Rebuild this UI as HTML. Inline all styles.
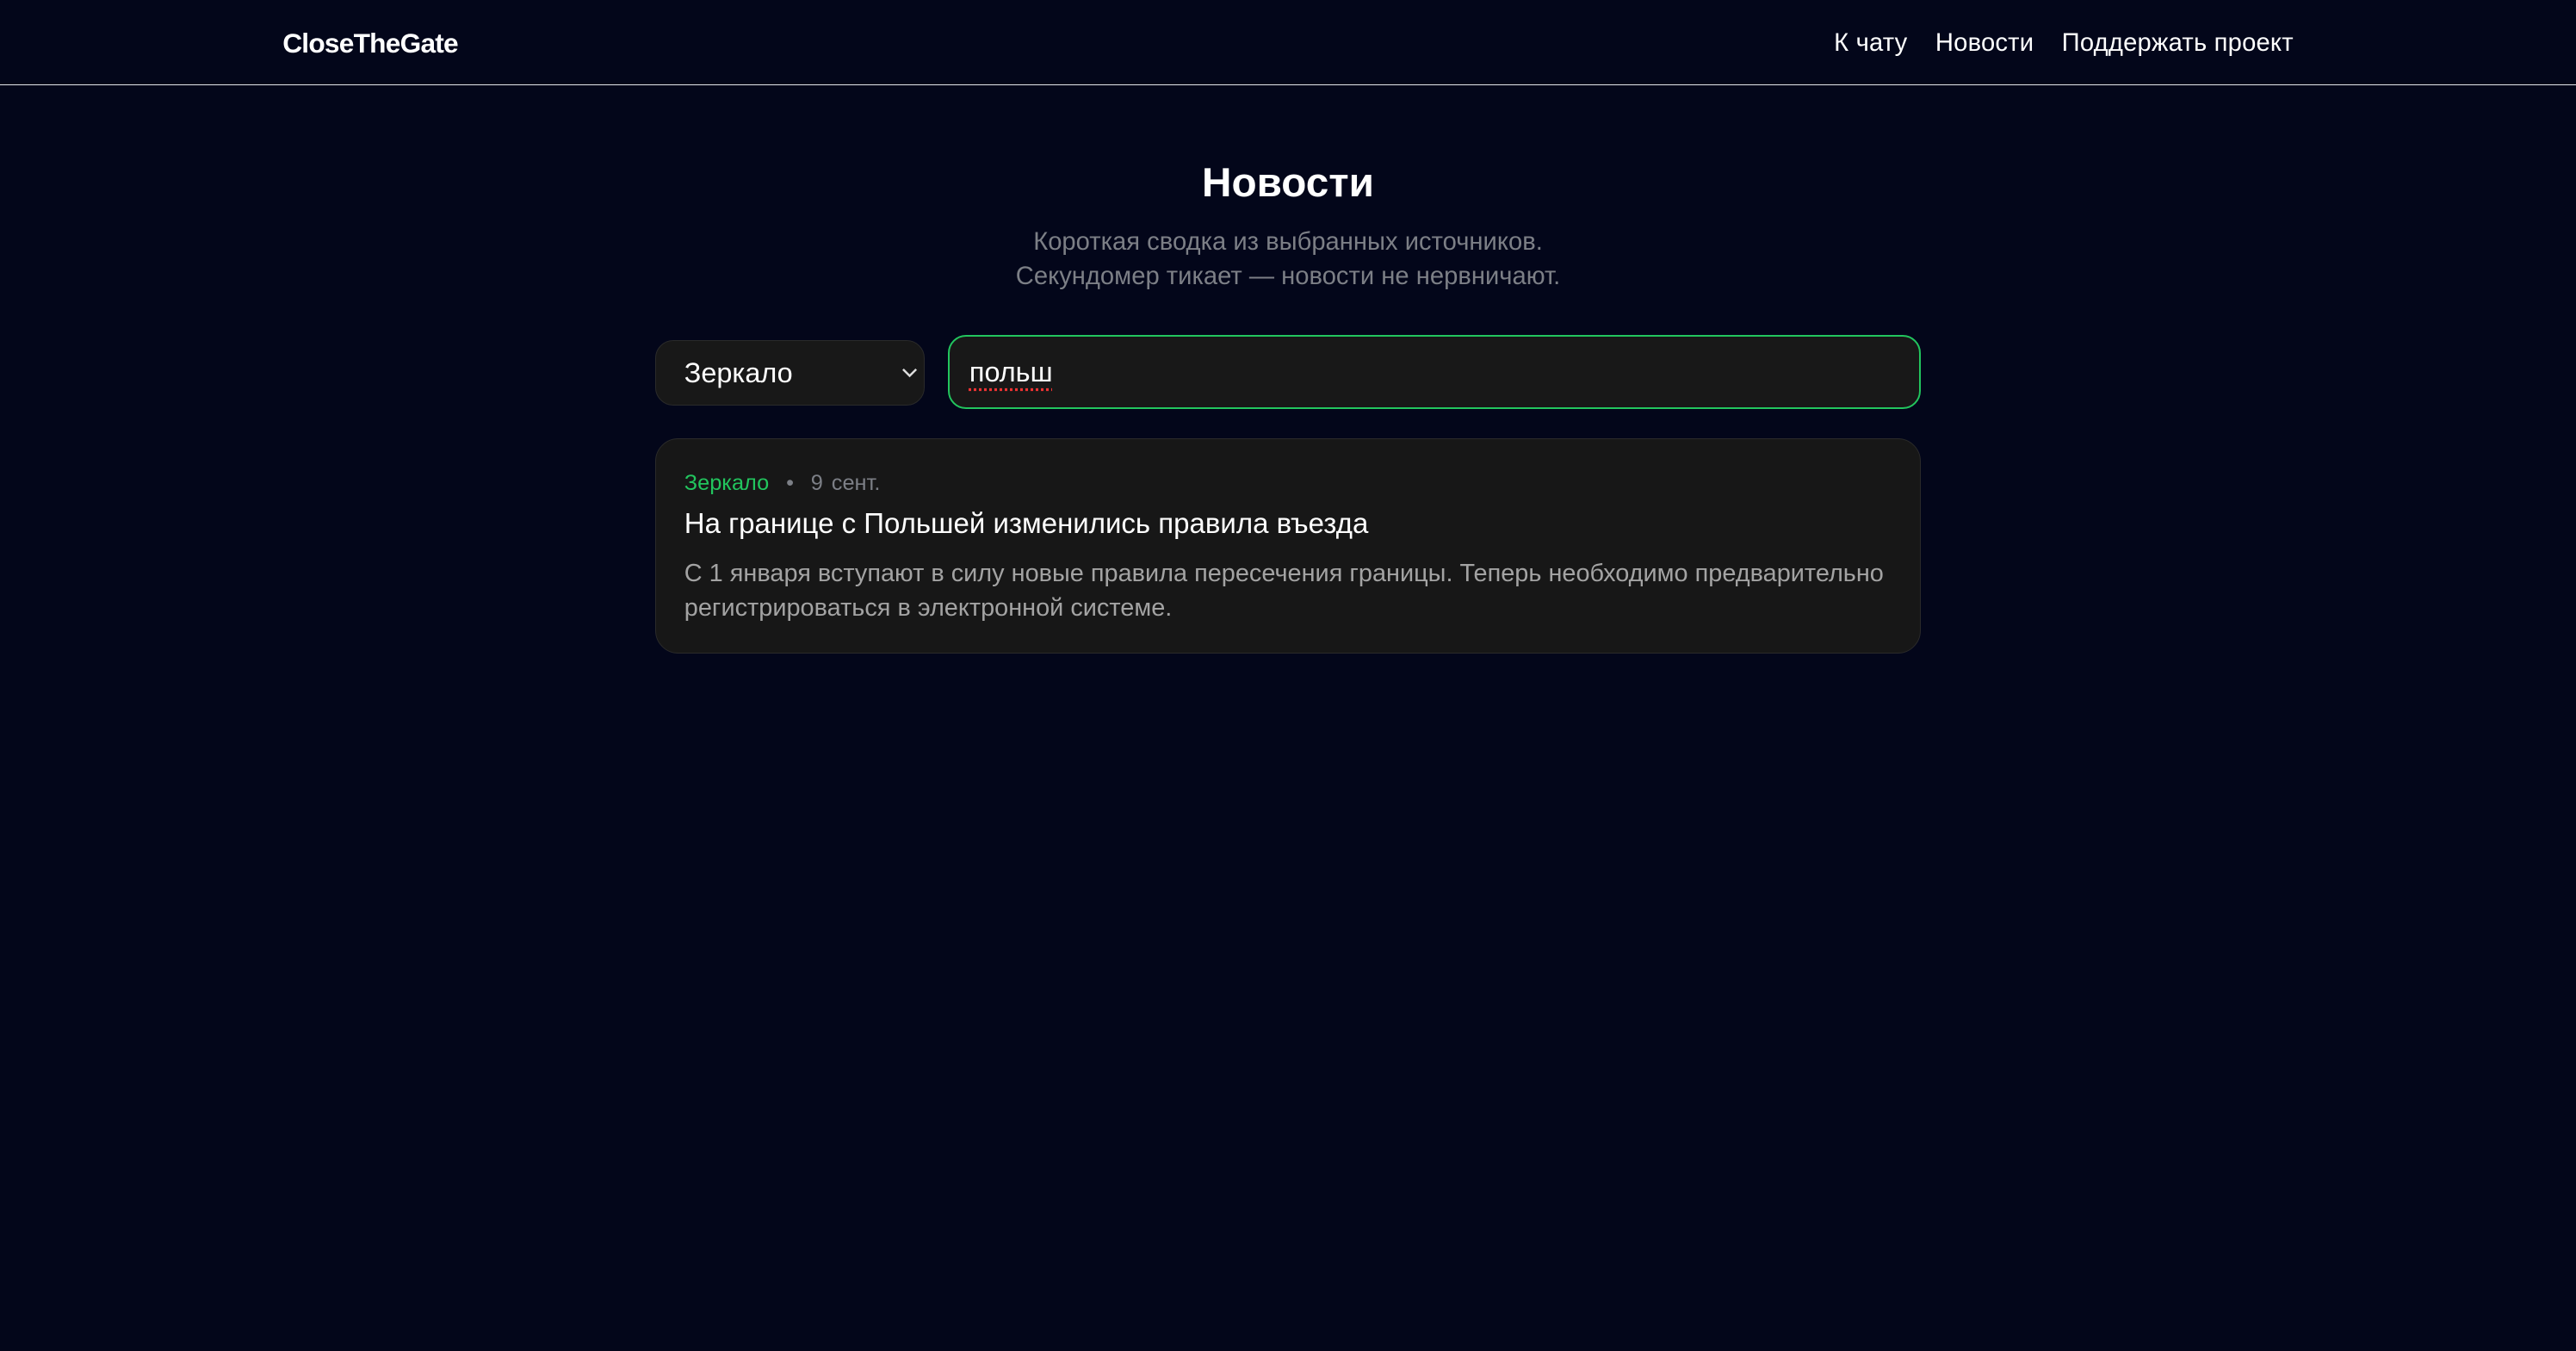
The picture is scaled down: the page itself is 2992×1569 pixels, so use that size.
<!DOCTYPE html>
<html><head><meta charset="utf-8"><style>
html{zoom:1.90816}
body{margin:0;background:#03061a;width:1568px;height:822px;overflow:hidden;font-family:"Liberation Sans","DejaVu Sans",sans-serif;color:#fff}
.hdr{height:52px;border-bottom:1px solid #e5e7eb;position:relative;box-sizing:border-box}
.logo{position:absolute;left:172px;top:17px;font-size:16.6px;font-weight:bold;letter-spacing:-0.4px}
.nav{position:absolute;right:172px;top:18px;font-size:15.3px;display:flex;gap:17px;letter-spacing:0.1px}
h1{margin:0;position:absolute;top:97px;width:100%;text-align:center;font-size:25px}
.sub{position:absolute;top:137px;width:100%;text-align:center;color:#7c7f86;font-size:15.3px;line-height:21px}
.sel{position:absolute;left:399px;top:207px;width:164px;height:40px;background:#181818;border:1px solid #2a2a2a;border-radius:11px;box-sizing:border-box}
.sel span{position:absolute;left:17px;top:10px;font-size:17px}
.sel svg{position:absolute;right:4px;top:16px}
.inp{position:absolute;left:577px;top:204px;width:592px;height:45px;background:#181818;border:1.5px solid #22c55e;border-radius:11px;box-sizing:border-box}
.inp span{position:absolute;left:12px;top:12px;font-size:17px;text-decoration:underline dotted #e33;text-underline-offset:4px}
.card{position:absolute;left:399px;top:267px;width:770px;height:131px;background:#171717;border:1px solid #2a2a2a;border-radius:14px;box-sizing:border-box}
.meta{position:absolute;left:17px;top:19px;font-size:13.3px;color:#7c7f86;word-spacing:1.5px}
.meta b{font-weight:normal;color:#22c55e}
.t{position:absolute;left:17px;top:41px;font-size:17.3px}
.d{position:absolute;left:17px;top:71px;right:8px;font-size:15.15px;line-height:21px;color:#a3a3a3}
</style></head><body>
<div class="hdr"><div class="logo">CloseTheGate</div>
<div class="nav"><span>К чату</span><span>Новости</span><span>Поддержать проект</span></div></div>
<h1>Новости</h1>
<div class="sub">Короткая сводка из выбранных источников.<br>Секундомер тикает — новости не нервничают.</div>
<div class="sel"><span>Зеркало</span><svg width="10" height="7" viewBox="0 0 10 7"><path d="M1 1l4 4 4-4" stroke="#ddd" stroke-width="1.3" fill="none"/></svg></div>
<div class="inp"><span>польш</span></div>
<div class="card">
<div class="meta"><b>Зеркало</b> &nbsp;•&nbsp; 9 сент.</div>
<div class="t">На границе с Польшей изменились правила въезда</div>
<div class="d">С 1 января вступают в силу новые правила пересечения границы. Теперь необходимо предварительно регистрироваться в электронной системе.</div>
</div>
</body></html>
